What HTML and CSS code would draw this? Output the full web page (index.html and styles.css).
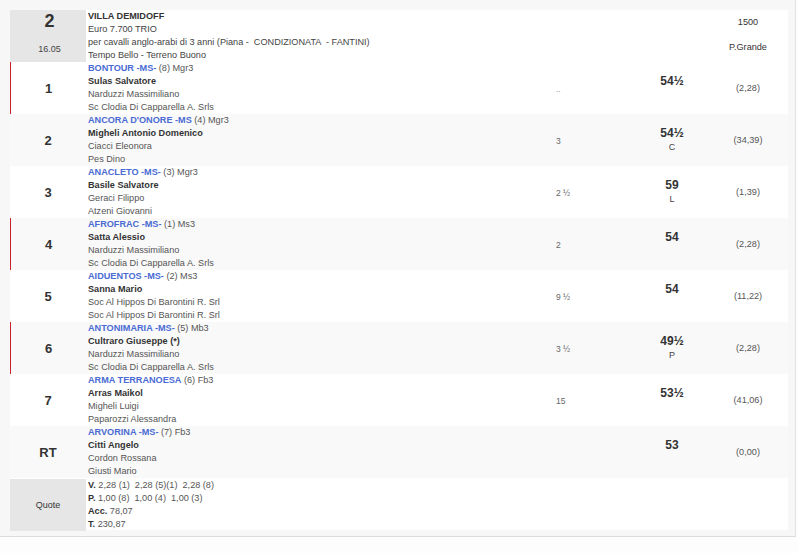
FILE: index.html
```html
<!DOCTYPE html>
<html>
<head>
<meta charset="utf-8">
<link rel="stylesheet" href="styles.css">
</head>
<body>
<div class="panel">
  <div class="race">
    <div class="row head">
      <div class="num grey"><div class="big">2</div><div class="time">16.05</div></div>
      <div class="info">
        <div class="b">VILLA DEMIDOFF</div>
        <div>Euro 7.700 TRIO</div>
        <div>per cavalli anglo-arabi di 3 anni (Piana -&nbsp; CONDIZIONATA &nbsp;- FANTINI)</div>
        <div>Tempo Bello - Terreno Buono</div>
      </div>
      <div class="dist"></div>
      <div class="wt"></div>
      <div class="odds hdr"><span>1500</span><span>P.Grande</span></div>
    </div>

    <div class="row mark">
      <div class="num">1</div>
      <div class="info">
        <div><span class="horse">BONTOUR -MS-</span> (8) Mgr3</div>
        <div class="b">Sulas Salvatore</div>
        <div>Narduzzi Massimiliano</div>
        <div>Sc Clodia Di Capparella A. Srls</div>
      </div>
      <div class="dist light">..</div>
      <div class="wt"><span class="w">54½</span><span class="l">&nbsp;</span></div>
      <div class="odds">(2,28)</div>
    </div>

    <div class="row alt">
      <div class="num">2</div>
      <div class="info">
        <div><span class="horse">ANCORA D'ONORE -MS</span> (4) Mgr3</div>
        <div class="b">Migheli Antonio Domenico</div>
        <div>Ciacci Eleonora</div>
        <div>Pes Dino</div>
      </div>
      <div class="dist">3</div>
      <div class="wt"><span class="w">54½</span><span class="l">C</span></div>
      <div class="odds">(34,39)</div>
    </div>

    <div class="row">
      <div class="num">3</div>
      <div class="info">
        <div><span class="horse">ANACLETO -MS-</span> (3) Mgr3</div>
        <div class="b">Basile Salvatore</div>
        <div>Geraci Filippo</div>
        <div>Atzeni Giovanni</div>
      </div>
      <div class="dist">2 ½</div>
      <div class="wt"><span class="w">59</span><span class="l">L</span></div>
      <div class="odds">(1,39)</div>
    </div>

    <div class="row alt mark">
      <div class="num">4</div>
      <div class="info">
        <div><span class="horse">AFROFRAC -MS-</span> (1) Ms3</div>
        <div class="b">Satta Alessio</div>
        <div>Narduzzi Massimiliano</div>
        <div>Sc Clodia Di Capparella A. Srls</div>
      </div>
      <div class="dist">2</div>
      <div class="wt"><span class="w">54</span><span class="l">&nbsp;</span></div>
      <div class="odds">(2,28)</div>
    </div>

    <div class="row">
      <div class="num">5</div>
      <div class="info">
        <div><span class="horse">AIDUENTOS -MS-</span> (2) Ms3</div>
        <div class="b">Sanna Mario</div>
        <div>Soc Al Hippos Di Barontini R. Srl</div>
        <div>Soc Al Hippos Di Barontini R. Srl</div>
      </div>
      <div class="dist">9 ½</div>
      <div class="wt"><span class="w">54</span><span class="l">&nbsp;</span></div>
      <div class="odds">(11,22)</div>
    </div>

    <div class="row alt mark">
      <div class="num">6</div>
      <div class="info">
        <div><span class="horse">ANTONIMARIA -MS-</span> (5) Mb3</div>
        <div class="b">Cultraro Giuseppe (*)</div>
        <div>Narduzzi Massimiliano</div>
        <div>Sc Clodia Di Capparella A. Srls</div>
      </div>
      <div class="dist">3 ½</div>
      <div class="wt"><span class="w">49½</span><span class="l">P</span></div>
      <div class="odds">(2,28)</div>
    </div>

    <div class="row">
      <div class="num">7</div>
      <div class="info">
        <div><span class="horse">ARMA TERRANOESA</span> (6) Fb3</div>
        <div class="b">Arras Maikol</div>
        <div>Migheli Luigi</div>
        <div>Paparozzi Alessandra</div>
      </div>
      <div class="dist">15</div>
      <div class="wt"><span class="w">53½</span><span class="l">&nbsp;</span></div>
      <div class="odds">(41,06)</div>
    </div>

    <div class="row alt">
      <div class="num">RT</div>
      <div class="info">
        <div><span class="horse">ARVORINA -MS-</span> (7) Fb3</div>
        <div class="b">Citti Angelo</div>
        <div>Cordon Rossana</div>
        <div>Giusti Mario</div>
      </div>
      <div class="dist"></div>
      <div class="wt"><span class="w">53</span><span class="l">&nbsp;</span></div>
      <div class="odds">(0,00)</div>
    </div>

    <div class="row quote">
      <div class="num grey qlabel">Quote</div>
      <div class="info">
        <div><b>V.</b> 2,28 (1)&nbsp; 2,28 (5)(1)&nbsp; 2,28 (8)</div>
        <div><b>P.</b> 1,00 (8)&nbsp; 1,00 (4)&nbsp; 1,00 (3)</div>
        <div><b>Acc.</b> 78,07</div>
        <div><b>T.</b> 230,87</div>
      </div>
      <div class="dist"></div>
      <div class="wt"></div>
      <div class="odds"></div>
    </div>
  </div>
</div>
</body>
</html>
```

FILE: styles.css
```css
html, body {
  margin: 0;
  padding: 0;
  background: #fdfdfd;
}

body {
  font-family: "Liberation Sans", Arial, sans-serif;
  font-size: 9.15px;
  color: #555;
}

.panel {
  width: 778px;
  padding: 10px 7px 6px 10px;
  background: #f7f7f7;
  border-right: 1px solid #e2e2e2;
  border-bottom: 1px solid #dcdcdc;
}

.race {
  background: #fff;
}

.row {
  display: grid;
  grid-template-columns: 76px 470px 68px 96px 68px;
  height: 52px;
  background: #fff;
}

.row.alt {
  background: #f9f9f9;
}

.num {
  display: flex;
  align-items: center;
  justify-content: center;
  font-size: 13px;
  font-weight: bold;
  color: #333;
  box-sizing: border-box;
}

.row.mark .num {
  border-left: 1px solid #c8232c;
}

.grey {
  background: #e6e6e6;
}

.head .num {
  flex-direction: column;
  justify-content: flex-start;
  padding-left: 3px;
}

.head .big {
  font-size: 18px;
  line-height: 20px;
  margin-top: 1px;
  color: #333;
}

.head .time {
  font-size: 9px;
  font-weight: normal;
  margin-top: 13px;
  color: #444;
}

.info {
  padding-left: 2px;
  line-height: 13px;
  color: #555;
}

.info .b,
.info b {
  font-weight: bold;
  color: #333;
}

.head .info {
  color: #444;
}

.horse {
  font-weight: bold;
  color: #4a6bd3;
}

.dist {
  display: flex;
  align-items: center;
  padding-top: 2px;
  box-sizing: border-box;
  color: #666;
  font-size: 8.5px;
}

.dist.light {
  color: #999;
}

.wt {
  display: flex;
  flex-direction: column;
  align-items: center;
  justify-content: center;
  padding-bottom: 1px;
  box-sizing: border-box;
}

.wt .w {
  font-size: 12px;
  font-weight: bold;
  color: #333;
  line-height: 15px;
}

.wt .l {
  font-size: 9px;
  line-height: 12px;
  color: #444;
}

.odds {
  display: flex;
  align-items: center;
  justify-content: center;
  padding-right: 12px;
  color: #555;
}

.odds.hdr {
  flex-direction: column;
  justify-content: flex-start;
  padding-top: 6px;
  line-height: 13px;
  gap: 12px;
  color: #333;
}

.quote {
  margin-top: 1px;
  height: 51px;
}

.qlabel {
  font-weight: normal;
  font-size: 9px;
  color: #333;
}
```
